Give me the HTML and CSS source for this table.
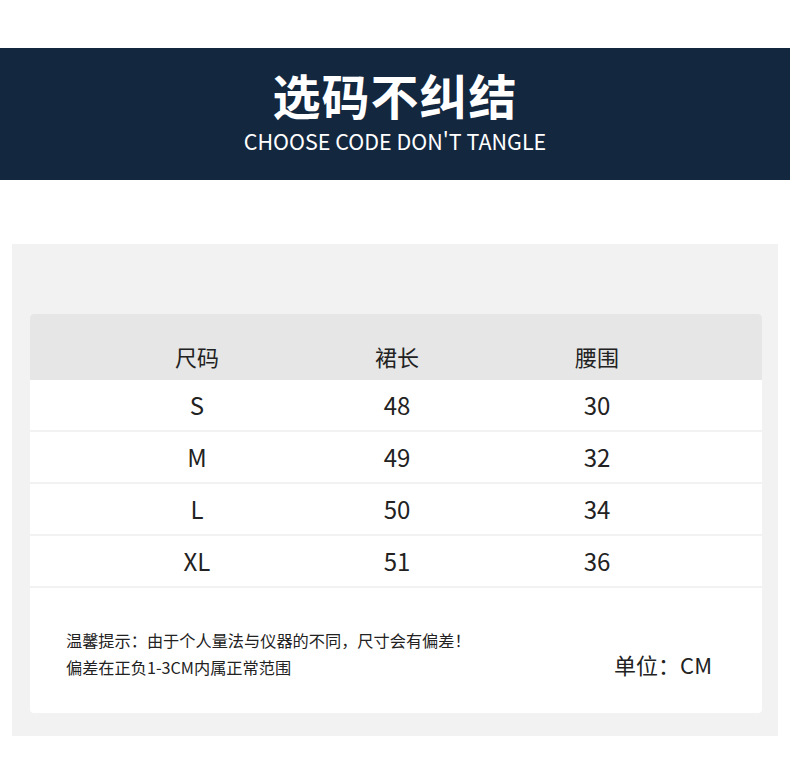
FILE: index.html
```html
<!DOCTYPE html>
<html lang="zh-CN">
<head>
<meta charset="utf-8">
<title>选码不纠结</title>
<link rel="stylesheet" href="styles.css">
</head>
<body>
<header class="banner">
  <h1 class="banner-title">选码不纠结</h1>
  <p class="banner-sub">CHOOSE CODE DON'T TANGLE</p>
</header>
<section class="panel">
  <div class="card">
    <div class="row head">
      <span>尺码</span><span>裙长</span><span>腰围</span>
    </div>
    <div class="row"><span>S</span><span>48</span><span>30</span></div>
    <div class="row"><span>M</span><span>49</span><span>32</span></div>
    <div class="row"><span>L</span><span>50</span><span>34</span></div>
    <div class="row"><span>XL</span><span>51</span><span>36</span></div>
    <div class="foot">
      <div class="note">
        <p>温馨提示：由于个人量法与仪器的不同，尺寸会有偏差！</p>
        <p>偏差在正负1-3CM内属正常范围</p>
      </div>
      <div class="unit">单位：CM</div>
    </div>
  </div>
</section>
</body>
</html>
```
FILE: styles.css
```css
html, body {
  margin: 0;
  padding: 0;
  background: #ffffff;
}
body {
  font-family: "Noto Sans CJK SC", "Noto Sans", sans-serif;
  color: #222222;
  padding-top: 48px;
}
.banner {
  background: #13273f;
  height: 132px;
  box-sizing: border-box;
  padding-top: 13px;
  text-align: center;
  color: #ffffff;
}
.banner-title {
  margin: 0;
  font-size: 48px;
  font-weight: 600;
  line-height: 66px;
  letter-spacing: 1px;
}
.banner-sub {
  margin: 0;
  font-size: 21.5px;
  line-height: 28px;
  font-weight: 400;
}
.panel {
  margin: 64px 12px 0 12px;
  background: #f2f2f2;
  padding: 70px 16px 23px 18px;
}
.card {
  background: #ffffff;
  border-radius: 4px;
  overflow: hidden;
}
.row {
  display: grid;
  grid-template-columns: 200px 200px 200px;
  padding-left: 67px;
  height: 50px;
  align-items: center;
  border-bottom: 2px solid #f2f2f2;
  font-size: 24px;
  line-height: 30px;
}
.row span {
  text-align: center;
}
.row.head {
  background: #e6e6e6;
  height: 66px;
  box-sizing: border-box;
  padding-top: 18px;
  border-bottom: 0;
  font-size: 22px;
}
.foot {
  height: 125px;
  display: flex;
  align-items: center;
  justify-content: space-between;
  padding: 0 50px 0 36px;
}
.note {
  padding-top: 6px;
}
.note p {
  margin: 0;
  font-size: 16.2px;
  line-height: 27px;
}
.unit {
  font-size: 22px;
  padding-top: 26px;
}
```
